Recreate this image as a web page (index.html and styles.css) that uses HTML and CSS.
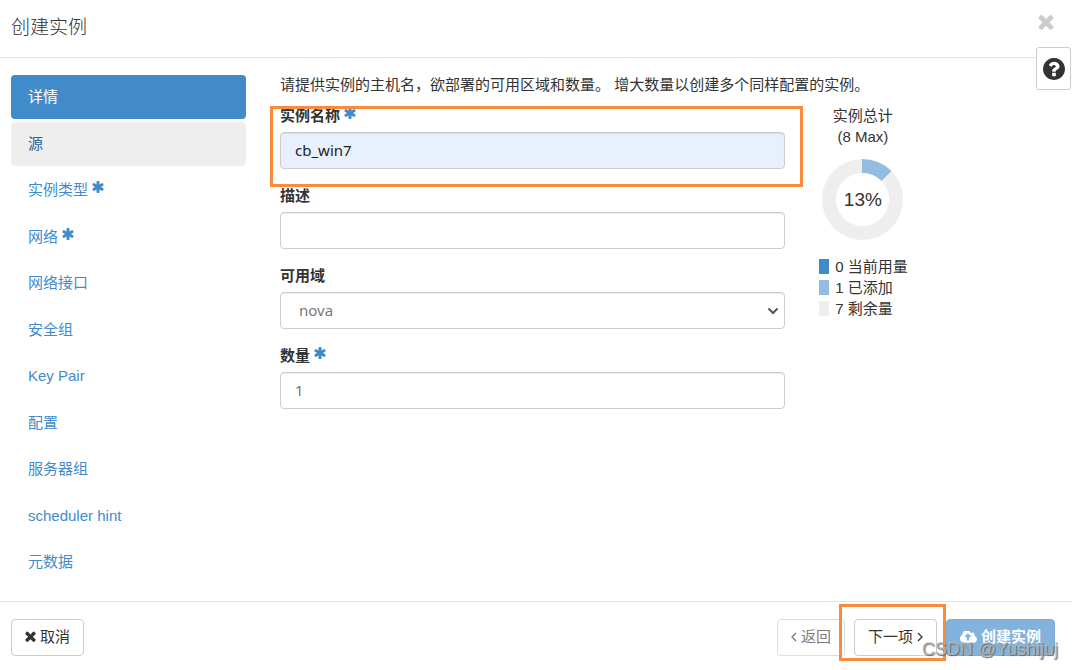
FILE: index.html
```html
<!DOCTYPE html>
<html lang="zh-CN">
    <head>
        <meta charset="utf-8">
        <title>创建实例</title>
        <link rel="stylesheet" href="styles.css">
    </head>

    <body>
        <!-- 图标 -->
        <svg class="sprite" aria-hidden="true">
            <symbol id="times" viewBox="300 300 1192 1256">
                <path d="M1490 1322q0 40-28 68l-136 136q-28 28-68 28t-68-28l-294-294-294 294q-28 28-68 28t-68-28l-136-136q-28-28-28-68t28-68l294-294-294-294q-28-28-28-68t28-68l136-136q28-28 68-28t68 28l294 294 294-294q28-28 68-28t68 28l136 136q28 28 28 68t-28 68l-294 294 294 294q28 28 28 68z"/>
            </symbol>
            <symbol id="asterisk" viewBox="160 128 1472 1536">
                <path d="M1546 1050q46 26 59.5 77.5t-12.5 97.5l-64 110q-26 46-77.5 59.5t-97.5-12.5l-266-153v307q0 52-38 90t-90 38h-128q-52 0-90-38t-38-90v-307l-266 153q-46 26-97.5 12.5t-77.5-59.5l-64-110q-26-46-12.5-97.500t59.5-77.5l266-154-266-154q-46-26-59.5-77.5t12.5-97.5l64-110q26-46 77.5-59.500t97.5 12.5l266 153v-307q0-52 38-90t90-38h128q52 0 90 38t38 90v307l266-153q46-26 97.5-12.5t77.5 59.5l64 110q26 46 12.5 97.5t-59.5 77.5l-266 154z"/>
            </symbol>
            <symbol id="question" viewBox="128 128 1536 1536">
                <path d="M1024 1376v-192q0-14-9-23t-23-9h-192q-14 0-23 9t-9 23v192q0 14 9 23t23 9h192q14 0 23-9t9-23zm256-672q0-88-55.5-163t-138.5-116-170-41q-243 0-371 213-15 24 8 42l132 100q7 6 19 6 16 0 25-12 53-68 86-92 34-24 86-24 48 0 85.5 26t37.5 59q0 38-20 61t-68 45q-63 28-115.5 86.5t-52.5 125.5v36q0 14 9 23t23 9h192q14 0 23-9t9-23q0-19 21.5-49.5t54.5-49.5q32-18 49-28.5t46-35 44.5-48 28-60.5 12.5-81zm384 192q0 209-103 385.5t-279.5 279.5-385.5 103-385.5-103-279.5-279.5-103-385.5 103-385.5 279.5-279.5 385.5-103 385.5 103 279.5 279.5 103 385.5z"/>
            </symbol>
            <symbol id="upload" viewBox="-64 256 1920 1280">
                <path d="M1216 864q0-14-9-23l-352-352q-9-9-23-9t-23 9l-351 351q-10 12-10 24 0 14 9 23t23 9h224v352q0 13 9.5 22.5t22.5 9.5h192q13 0 22.5-9.5t9.5-22.5v-352h224q13 0 22.5-9.5t9.5-22.5zm640 288q0 159-112.5 271.5t-271.5 112.5h-1088q-185 0-316.5-131.5t-131.5-316.5q0-130 70-240t188-165q-2-30-2-43 0-212 150-362t362-150q156 0 285.5 87t188.5 231q71-62 166-62 106 0 181 75t75 181q0 76-41 138 130 31 213.5 135.5t83.500 238.5z"/>
            </symbol>
            <symbol id="left" viewBox="0 0 6 10">
                <path d="M5 1L1 5l4 4" fill="none" stroke="currentColor" stroke-width="1.3"/>
            </symbol>
            <symbol id="right" viewBox="0 0 6 10">
                <path d="M1 1l4 4-4 4" fill="none" stroke="currentColor" stroke-width="1.3"/>
            </symbol>
            <symbol id="down" viewBox="0 0 12 8">
                <path d="M1.500 1.500l4.500 4.500 4.500-4.500" fill="none" stroke="currentColor" stroke-width="2"/>
            </symbol>
        </svg>

        <div class="modal">
            <header class="modal-header">
                <h1>创建实例</h1>
                <button class="close" type="button" aria-label="关闭"><svg><use href="#times"/></svg></button>
                <button class="help" type="button" aria-label="帮助"><svg><use href="#question"/></svg></button>
            </header>

            <div class="modal-body">
                <nav class="steps">
                    <a class="active" href="#">详情</a>
                    <a class="hover" href="#">源</a>
                    <a href="#">实例类型<svg class="required"><use href="#asterisk"/></svg></a>
                    <a href="#">网络<svg class="required"><use href="#asterisk"/></svg></a>
                    <a href="#">网络接口</a>
                    <a href="#">安全组</a>
                    <a href="#">Key Pair</a>
                    <a href="#">配置</a>
                    <a href="#">服务器组</a>
                    <a href="#">scheduler hint</a>
                    <a href="#">元数据</a>
                </nav>

                <main class="content">
                    <p class="intro">请提供实例的主机名，欲部署的可用区域和数量。 增大数量以创建多个同样配置的实例。</p>
                    <div class="details">
                        <form class="form" id="launch">
                            <div class="form-group marked">
                                <label for="name">实例名称<svg class="required"><use href="#asterisk"/></svg></label>
                                <input class="filled" id="name" type="text" value="cb_win7">
                            </div>
                            <div class="form-group">
                                <label for="description">描述</label>
                                <input id="description" type="text">
                            </div>
                            <div class="form-group">
                                <label for="zone">可用域</label>
                                <div class="select">
                                    <select id="zone"><option>nova</option></select>
                                    <svg><use href="#down"/></svg>
                                </div>
                            </div>
                            <div class="form-group">
                                <label for="count">数量<svg class="required"><use href="#asterisk"/></svg></label>
                                <input id="count" type="text" inputmode="numeric" value="1">
                            </div>
                        </form>

                        <aside class="quota">
                            <div class="quota-title">实例总计<br>(8 Max)</div>
                            <div class="donut"><span>13%</span></div>
                            <ul class="legend">
                                <li class="used">0 当前用量</li>
                                <li class="added">1 已添加</li>
                                <li class="left">7 剩余量</li>
                            </ul>
                        </aside>
                    </div>
                </main>
            </div>

            <footer class="modal-footer">
                <button class="btn cancel" type="button"><svg class="icon-times"><use href="#times"/></svg>取消</button>
                <button class="btn" type="button" disabled><svg class="icon-angle"><use href="#left"/></svg>返回</button>
                <div class="next marked">
                    <button class="btn" type="button">下一项<svg class="icon-angle"><use href="#right"/></svg></button>
                </div>
                <button class="btn primary" type="submit" form="launch" disabled><svg class="icon-upload"><use href="#upload"/></svg>创建实例</button>
                <span class="watermark">CSDN @Yushijuj</span>
            </footer>
        </div>
    </body>
</html>
```

FILE: styles.css
```css
* {
    box-sizing: border-box;
}
body {
    margin: 0;
    color: #333;
    background: #fff;
    font: 15px/21px "Liberation Sans", "Noto Sans CJK SC", sans-serif;
}
svg {
    fill: currentColor;
}
.sprite {
    position: absolute;
    width: 0;
    height: 0;
}
button, input, select {
    font: inherit;
    color: inherit;
}
.modal {
    display: flex;
    flex-direction: column;
    min-height: 100vh;
}

/* 标题栏 */
.modal-header {
    position: relative;
    display: flex;
    justify-content: space-between;
    align-items: flex-start;
    padding: 14px 18px 16px 11px;
    border-bottom: 1px solid #e5e5e5;
}
.modal-header h1 {
    margin: 0;
    font-size: 19px;
    font-weight: 300;
    line-height: 27px;
}
.close {
    display: flex;
    padding: 0;
    border: 0;
    background: none;
    color: #ccc;
}
.close svg {
    width: 16px;
    height: 16px;
}
.help {
    position: absolute;
    top: 47px;
    right: 1px;
    display: flex;
    align-items: center;
    justify-content: center;
    width: 35px;
    height: 43px;
    padding: 0;
    border: 1px solid #ccc;
    border-radius: 3px;
    background: #fff;
}
.help svg {
    width: 22px;
    height: 22px;
}

/* 主体 */
.modal-body {
    flex: 1;
    display: grid;
    grid-template-columns: 235px 1fr;
    gap: 34px;
    padding: 17px 0 17px 11px;
}
.steps {
    display: flex;
    flex-direction: column;
    justify-content: space-between;
}
.steps a {
    padding: 11px 17px 12px;
    border-radius: 4px;
    color: #428bca;
    text-decoration: none;
}
.steps a.active {
    color: #fff;
    background: #428bca;
}
.steps a.hover {
    color: #2a6496;
    background: #eee;
}
.required {
    width: 12px;
    height: 12px;
    margin-left: 4px;
    vertical-align: 2px;
    color: #428bca;
}
.intro {
    margin: 0 0 10px;
    line-height: 20px;
}
.details {
    display: flex;
    gap: 34px;
}
.form {
    flex: 2 1 0;
}
.quota {
    flex: 1 1 0;
}
.form-group {
    margin-bottom: 16px;
}
.form-group label {
    display: block;
    height: 21px;
    margin-bottom: 6px;
    font-weight: bold;
}
.form-group input, .form-group select {
    display: block;
    width: 100%;
    height: 37px;
    padding: 0 14px 2px;
    border: 1px solid #ccc;
    border-radius: 4px;
    background: #fff;
    box-shadow: inset 0 1px 1px rgba(0, 0, 0, .08);
    color: #777;
    font-family: "Noto Sans", "Noto Sans CJK SC", sans-serif;
}
.form-group input.filled {
    color: #222;
    background: #e8f0fe;
}
.form-group select {
    padding: 0 18px;
    appearance: none;
}
.select {
    position: relative;
}
.select svg {
    position: absolute;
    top: 15px;
    right: 6px;
    width: 12px;
    height: 8px;
    color: #555;
    pointer-events: none;
}

/* 橙色标注框 */
.marked {
    position: relative;
}
.marked::after {
    content: "";
    position: absolute;
    inset: 1px -18px -18px -10px;
    border: 3px solid #f98b3c;
    pointer-events: none;
}
.next.marked::after {
    inset: -15px -9px -5px -15px;
}

/* 配额 */
.quota {
    display: flex;
    flex-direction: column;
    align-items: flex-start;
}
.quota-title, .donut {
    margin-left: 3px;
}
.quota-title {
    width: 81px;
    text-align: center;
    white-space: nowrap;
}
.donut {
    display: grid;
    place-items: center;
    width: 81px;
    height: 81px;
    margin-top: 12px;
    border-radius: 50%;
    background: radial-gradient(#fff 26px, transparent 27px), conic-gradient(#92bce0 12.5%, #eee 0);
    font-size: 19px;
}
.legend {
    margin: 16px 0 0;
    padding: 0;
    list-style: none;
}
.legend li {
    display: flex;
    align-items: center;
    gap: 6px;
}
.legend li::before {
    content: "";
    width: 10px;
    height: 15px;
    background: #eee;
}
.legend .used::before {
    background: #428bca;
}
.legend .added::before {
    background: #92bce0;
}

/* 底部按钮 */
.modal-footer {
    position: relative;
    display: flex;
    gap: 9px;
    padding: 17px 17px 14px 11px;
    border-top: 1px solid #e5e5e5;
}
.btn {
    display: flex;
    align-items: center;
    gap: 4px;
    height: 37px;
    padding: 0 13px 2px;
    border: 1px solid #ccc;
    border-radius: 4px;
    background: #fff;
    white-space: nowrap;
}
.btn:disabled {
    opacity: .65;
}
.btn.cancel {
    margin-right: auto;
}
.btn.primary {
    color: #fff;
    border-color: #357ebd;
    background: #428bca;
    font-weight: bold;
}
.icon-times {
    width: 11px;
    height: 11px;
}
.icon-angle {
    width: 6px;
    height: 10px;
}
.icon-upload {
    width: 17px;
    height: 12px;
}
.watermark {
    position: absolute;
    right: 14px;
    bottom: 7px;
    color: rgba(190, 190, 190, .8);
    font-size: 18px;
    line-height: 27px;
    text-shadow: 1px 1px 1px #666;
}
```
